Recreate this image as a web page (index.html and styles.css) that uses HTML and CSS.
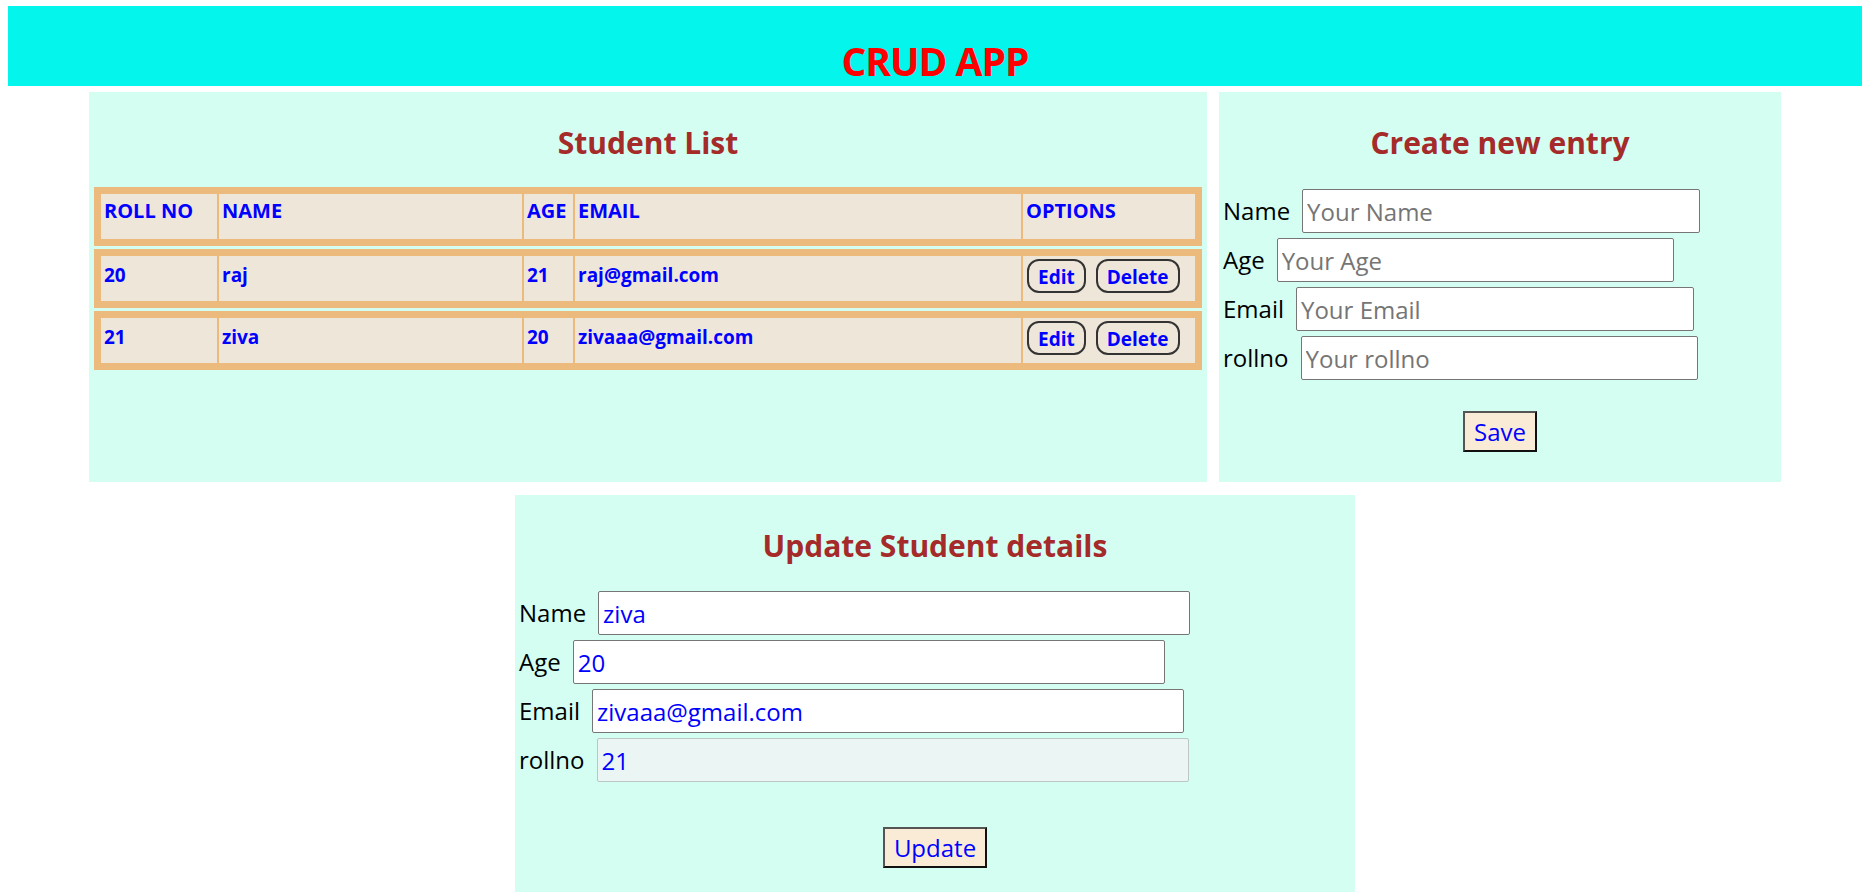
FILE: index.html
```html
<!DOCTYPE html>
<html lang="en">
<head>
<meta charset="utf-8">
<title>CRUD APP</title>
<link rel="stylesheet" href="styles.css">
</head>
<body>
<header class="app-header">
  <h1 class="app-title">CRUD APP</h1>
</header>
<main class="app-main">
  <div class="top-row">
    <section class="panel panel-list">
      <h2 class="panel-title">Student List</h2>
      <table class="row-table">
        <colgroup><col class="c-roll"><col class="c-name"><col class="c-age"><col class="c-email"><col></colgroup>
        <tr><th>ROLL NO</th><th>NAME</th><th>AGE</th><th>EMAIL</th><th>OPTIONS</th></tr>
      </table>
      <table class="row-table">
        <colgroup><col class="c-roll"><col class="c-name"><col class="c-age"><col class="c-email"><col></colgroup>
        <tr>
          <td>20</td><td>raj</td><td>21</td><td>raj@gmail.com</td>
          <td class="opt-cell"><div class="btn-row"><button class="btn-small">Edit</button><button class="btn-small">Delete</button></div></td>
        </tr>
      </table>
      <table class="row-table">
        <colgroup><col class="c-roll"><col class="c-name"><col class="c-age"><col class="c-email"><col></colgroup>
        <tr>
          <td>21</td><td>ziva</td><td>20</td><td>zivaaa@gmail.com</td>
          <td class="opt-cell"><div class="btn-row"><button class="btn-small">Edit</button><button class="btn-small">Delete</button></div></td>
        </tr>
      </table>
    </section>
    <section class="panel panel-create">
      <h2 class="panel-title">Create new entry</h2>
      <form class="entry-form">
        <div class="field"><label>Name</label><input type="text" placeholder="Your Name"></div>
        <div class="field"><label>Age</label><input type="text" placeholder="Your Age"></div>
        <div class="field"><label>Email</label><input type="text" placeholder="Your Email"></div>
        <div class="field"><label>rollno</label><input type="text" placeholder="Your rollno"></div>
        <div class="actions"><button type="button" class="btn-main">Save</button></div>
      </form>
    </section>
  </div>
  <section class="panel panel-update">
    <h2 class="panel-title">Update Student details</h2>
    <form class="entry-form entry-form-update">
      <div class="field"><label>Name</label><input type="text" value="ziva"></div>
      <div class="field"><label>Age</label><input type="text" value="20"></div>
      <div class="field"><label>Email</label><input type="text" value="zivaaa@gmail.com"></div>
      <div class="field"><label>rollno</label><input type="text" value="21" disabled></div>
      <div class="actions actions-update"><button type="button" class="btn-main">Update</button></div>
    </form>
  </section>
</main>
</body>
</html>
```

FILE: styles.css
```css
html, body {
  background: #ffffff;
}

body {
  margin: 6px 8px 0;
  font-family: "Open Sans", "Noto Sans", sans-serif;
  color: #000;
}

.app-header {
  background: #04f5ec;
  height: 80px;
  box-sizing: border-box;
  padding-top: 35px;
  text-align: center;
}

.app-title {
  margin: 0;
  font-size: 39px;
  line-height: 40px;
  font-weight: 700;
  letter-spacing: -1px;
  color: #ff0000;
}

.app-main {
  display: flex;
  flex-direction: column;
  align-items: center;
  padding-top: 6px;
}

.top-row {
  display: flex;
  gap: 12px;
  width: 1692px;
}

.panel {
  background: #d5fef3;
  box-sizing: border-box;
}

.panel-list {
  width: 1118px;
}

.panel-create {
  width: 562px;
  padding-bottom: 30px;
}

.panel-update {
  width: 840px;
  margin-top: 13px;
  padding-bottom: 24px;
}

.panel-title {
  margin: 33px 0 26px;
  font-size: 30px;
  line-height: 36px;
  font-weight: 700;
  color: #a52a2a;
  text-align: center;
}

/* student list rows */
.row-table {
  box-sizing: border-box;
  width: 1108px;
  margin: 0 5px 3px;
  border: 5px solid #edba7e;
  border-spacing: 2px;
  background: #edba7e;
  table-layout: fixed;
}

.c-roll { width: 116px; }
.c-name { width: 303px; }
.c-age { width: 49px; }
.c-email { width: 446px; }

.row-table tr {
  height: 45px;
}

.row-table th,
.row-table td {
  background: #efe6da;
  color: #0000ff;
  font-weight: 700;
  text-align: left;
  vertical-align: top;
  line-height: 24px;
  padding: 7px 3px 0;
  white-space: nowrap;
  overflow: hidden;
}

.row-table th {
  font-size: 20px;
  padding-top: 5px;
}

.row-table td {
  font-size: 19px;
}

.row-table td.opt-cell {
  padding-top: 3px;
  padding-left: 4px;
}

.btn-row {
  display: flex;
  gap: 10px;
}

.btn-small {
  height: 34px;
  box-sizing: border-box;
  padding: 3px 9px 0;
  border: 2px solid #333;
  border-radius: 12px;
  background: transparent;
  color: #0000ff;
  font-family: "Open Sans", "Noto Sans", sans-serif;
  font-size: 19px;
  font-weight: 700;
  line-height: 27px;
}

/* forms */
.entry-form {
  margin: 0;
  padding-top: 2px;
}

.entry-form-update {
  padding-top: 1px;
}

.field {
  display: flex;
  align-items: center;
  gap: 12px;
  height: 44px;
  margin-bottom: 5px;
  padding-left: 4px;
}

.field label {
  font-size: 24px;
  line-height: 32px;
  color: #000;
}

.field input {
  width: calc(70% + 7px);
  height: 44px;
  box-sizing: border-box;
  padding: 0 4px;
  border: 1px solid #767676;
  border-radius: 2px;
  background: #ffffff;
  color: #0000ff;
  font-family: "Open Sans", "Noto Sans", sans-serif;
  font-size: 24px;
}

.field input::placeholder {
  color: #757575;
}

.field input:disabled {
  background: #ebf6f4;
  border-color: #bcc6c4;
  color: #0000ff;
}

.actions {
  text-align: center;
  margin-top: 31px;
}

.actions-update {
  margin-top: 45px;
}

.btn-main {
  height: 41px;
  box-sizing: border-box;
  padding: 0 9px;
  border: 2px solid;
  border-color: #555 #111 #111 #555;
  background: #faebd7;
  color: #0000ff;
  font-family: "Open Sans", "Noto Sans", sans-serif;
  font-size: 24px;
  line-height: 37px;
}
```
